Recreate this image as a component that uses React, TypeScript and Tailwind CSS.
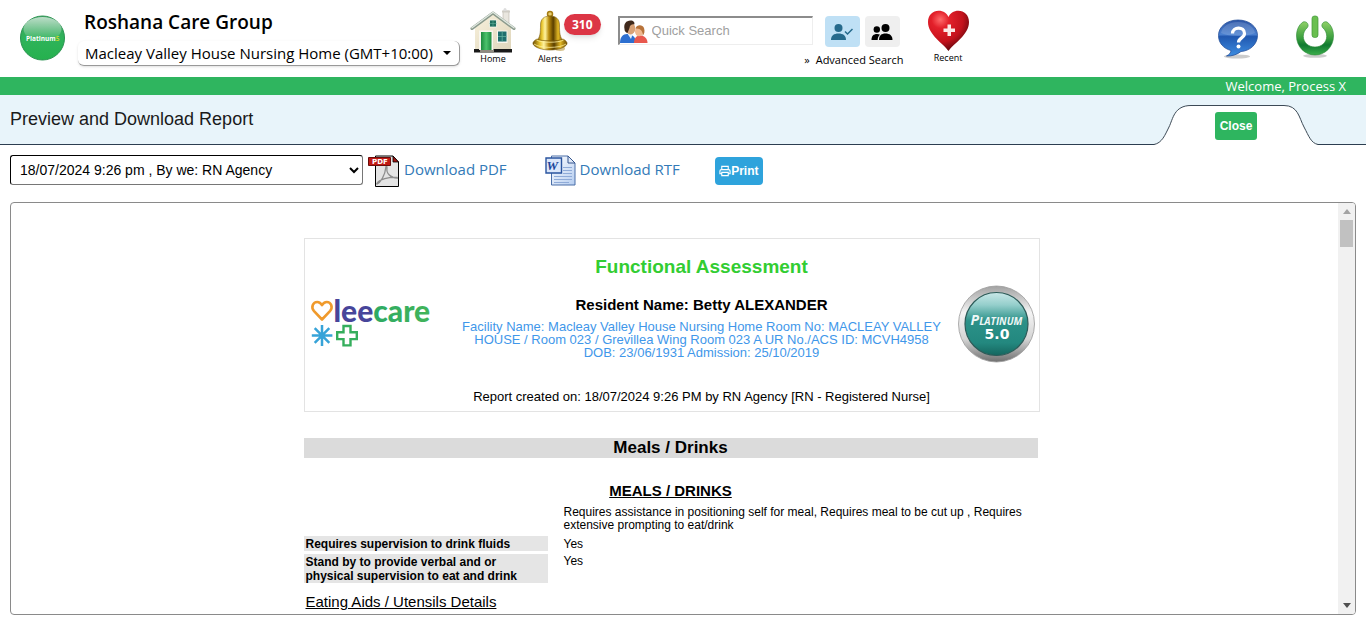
import React from "react";

const UI = "font-['Open_Sans','Noto_Sans',sans-serif]";
const ARIAL = "font-['Liberation_Sans',Arial,sans-serif]";

function PlatinumLogo() {
  return (
    <svg className="size-[46px] shrink-0" viewBox="0 0 46 46" role="img" aria-label="Platinum 5">
      <defs>
        <linearGradient id="ball" x1="0" y1="0" x2="0" y2="1">
          <stop offset="0" stopColor="#3f9f62" />
          <stop offset=".5" stopColor="#2fb35a" />
          <stop offset="1" stopColor="#25b14e" />
        </linearGradient>
        <linearGradient id="shine" x1="0" y1="0" x2="0" y2="1">
          <stop offset="0" stopColor="#fff" stopOpacity=".65" />
          <stop offset="1" stopColor="#fff" stopOpacity="0" />
        </linearGradient>
      </defs>
      <circle cx="23.500" cy="23" r="22" fill="url(#ball)" stroke="#2a9350" strokeWidth="1" />
      <ellipse cx="23.500" cy="14" rx="19" ry="12" fill="url(#shine)" />
      <text x="7" y="25.500" fontSize="6.500" fontWeight="700" fontFamily="Open Sans" fill="#fff">
        Platinum<tspan fill="#b9d532">5</tspan>
      </text>
    </svg>
  );
}

function HomeIcon() {
  return (
    <svg className="h-[45px] w-[46px]" viewBox="0 0 46 45" aria-hidden="true">
      <defs>
        <linearGradient id="wall" x1="0" y1="0" x2="1" y2="1">
          <stop offset="0" stopColor="#f8f1dc" />
          <stop offset="1" stopColor="#dfd6bc" />
        </linearGradient>
        <linearGradient id="door" x1="0" y1="0" x2="1" y2="0">
          <stop offset="0" stopColor="#1c8a3e" />
          <stop offset=".5" stopColor="#4cc26c" />
          <stop offset="1" stopColor="#1d8c40" />
        </linearGradient>
      </defs>
      <path d="M33 3h6v18l-6-6z" fill="#e9e6df" stroke="#b8b4aa" strokeWidth=".6" />
      <path d="M32 2.500h8v2h-8z" fill="#cfccc5" />
      <circle cx="35" cy="1.500" r="1.500" fill="#ddd" />
      <path d="M5 20 23 6l18 14v21H5z" fill="url(#wall)" />
      <path d="M4 41h38v3.500H4z" fill="#1a1a1a" />
      <path d="M10 41h14v3.500H10z" fill="#8f8b80" />
      <path d="M2 20.500 23 5l21 15.500" fill="none" stroke="#8b9a8c" strokeWidth="3" strokeLinecap="round" strokeLinejoin="round" />
      <path d="M2 19.800 23 4.300l21 15.500" fill="none" stroke="#dfe7df" strokeWidth="1.400" strokeLinecap="round" />
      <path d="M19.500 12h7v7h-7z" fill="#1f6f5e" stroke="#f7f7ef" strokeWidth=".8" />
      <path d="M23 12v7M19.500 15.500h7" stroke="#5fae98" strokeWidth=".6" />
      <path d="M9 22.500h14V42H9z" fill="#f8f6ee" />
      <path d="M11 24h10.500v18H11z" fill="url(#door)" />
      <path d="M27 22.500h10.500V35H27z" fill="#f8f6ee" />
      <path d="M28 23.500h8.500v10H28z" fill="#1f6f6e" />
      <path d="M32.200 23.500v10M28 28.500h8.500" stroke="#62b0a0" strokeWidth=".8" />
    </svg>
  );
}

function BellIcon() {
  return (
    <svg className="h-[43px] w-9" viewBox="0 0 36 43" aria-hidden="true">
      <defs>
        <linearGradient id="gold" x1="0" y1="0" x2="1" y2="0">
          <stop offset="0" stopColor="#6d4c00" />
          <stop offset=".2" stopColor="#e8c42c" />
          <stop offset=".32" stopColor="#fff3a0" />
          <stop offset=".46" stopColor="#b98b0c" />
          <stop offset=".62" stopColor="#5a3f00" />
          <stop offset=".8" stopColor="#e3b824" />
          <stop offset="1" stopColor="#6c4b00" />
        </linearGradient>
      </defs>
      <ellipse cx="28" cy="38.500" rx="5" ry="2.500" fill="#b99a40" opacity=".6" />
      <circle cx="18" cy="4" r="2.500" fill="#e8cf70" stroke="#a67c12" strokeWidth="1.500" />
      <path d="M18 6c-6 0-9.500 3-9.500 9 0 8-.5 12.500-4 16h27c-3.500-3.500-4-8-4-16 0-6-3.500-9-9.500-9z" fill="url(#gold)" stroke="#76560a" strokeWidth=".5" />
      <path d="M5 29c-3 1.500-4.500 3.500-4 5 1.500 3.500 9 6 17 6s15.500-2.500 17-6c.5-1.500-1-3.500-4-5-4 2.500-22 2.500-26 0z" fill="url(#gold)" stroke="#76560a" strokeWidth=".6" />
      <path d="M4.500 30c5 3 22 3 27 0M2 34c6 4.500 26 4.500 32 0" fill="none" stroke="#fff0a0" strokeWidth=".9" opacity=".85" />
    </svg>
  );
}

function PeopleIcon() {
  return (
    <svg className="h-6 w-[28px] shrink-0" viewBox="0 0 28 24" aria-hidden="true">
      <path d="M0 24c0-6 3-9 7-9s9 2 9 9z" fill="#2d6fd0" />
      <path d="M7 14h6l-2 6z" fill="#e9f1fb" />
      <path d="M14 24c0-5 2.500-7.500 6-7.500 4 0 7.500 2.500 7.500 7.500z" fill="#e8584e" />
      <ellipse cx="10.500" cy="9.500" rx="4.800" ry="6" fill="#d9a277" />
      <path d="M4.500 10c-1-5 1.500-8.500 6-8.500 3 0 4.500 2 3.800 3.800-2.800-.3-4.500.7-4.800 3.700L7.500 14c-2-.5-3-2-3-4z" fill="#40291b" />
      <ellipse cx="19" cy="12.500" rx="4" ry="4.800" fill="#f0b88f" />
      <path d="M15.500 9.500c1-4 7-4.500 8.500-.5 1 3 .5 6-1.500 8 .5-3-.5-5-2-6.300-1.500-1-3-1.200-5-1.200z" fill="#b8733a" />
    </svg>
  );
}

function HeartIcon() {
  return (
    <svg className="h-[42px] w-[43px]" viewBox="0 0 43 42" aria-hidden="true">
      <defs>
        <radialGradient id="heart" cx=".3" cy=".22" r=".85">
          <stop offset="0" stopColor="#ff6a6a" />
          <stop offset=".25" stopColor="#e3202a" />
          <stop offset=".65" stopColor="#c3121c" />
          <stop offset="1" stopColor="#4e050a" />
        </radialGradient>
      </defs>
      <path d="M21.500 41C17 34 1 25 1 12 1 5 6 .8 11.500.8c5 0 8.500 2.700 10 6.200 1.500-3.500 5-6.200 10-6.200C37 .8 42 5 42 12c0 13-16 22-20.500 29z" fill="url(#heart)" />
      <path d="M20.500 14.500h3.500v4h4V22h-4v4h-3.500v-4h-4v-3.500h4z" fill="#fbe9e6" />
    </svg>
  );
}

function HelpIcon() {
  return (
    <svg className="h-10 w-10" viewBox="0 0 40 40" aria-hidden="true">
      <defs>
        <linearGradient id="bubble" x1="0" y1="0" x2="0" y2="1">
          <stop offset="0" stopColor="#2c55a5" />
          <stop offset=".4" stopColor="#4a80d0" />
          <stop offset=".46" stopColor="#2158b0" />
          <stop offset="1" stopColor="#3d8de0" />
        </linearGradient>
      </defs>
      <ellipse cx="19" cy="37.500" rx="13" ry="2" fill="#999" opacity=".5" />
      <path d="M20 1c11 0 19.500 6.500 19.500 15.500S31.500 32 23 32.500C20 35 14 37.500 8.500 37c3-1.500 4.500-3.500 4.500-5.500C5.500 29.500.5 24 .5 16.500.5 7.500 9 1 20 1z" fill="url(#bubble)" stroke="#27509a" strokeWidth=".8" />
      <path d="M20 3c9 0 16 4.500 17 11-8 4-26 4-34 0C4 7.500 11 3 20 3z" fill="#fff" opacity=".15" />
      <path d="M14.500 14.500c0-7 12-7.500 12 0 0 4.500-6 4.300-6 9" fill="none" stroke="#fff" strokeWidth="3.200" />
      <circle cx="20.500" cy="27.500" r="2" fill="#fff" />
    </svg>
  );
}

function PowerIcon() {
  return (
    <svg className="h-[43px] w-10" viewBox="0 0 40 43" aria-hidden="true">
      <defs>
        <linearGradient id="power" x1="0" y1="0" x2="0" y2="1">
          <stop offset="0" stopColor="#8fd067" />
          <stop offset=".5" stopColor="#3a9e3e" />
          <stop offset=".7" stopColor="#107a30" />
          <stop offset="1" stopColor="#3cae4c" />
        </linearGradient>
      </defs>
      <ellipse cx="19" cy="40.800" rx="12" ry="2" fill="#999" opacity=".5" />
      <path d="M7 7C2.500 10 .5 15.500.5 21 .5 32 9 40 19 40s18.500-8 18.500-19c0-5.500-2-11-6.500-14-3.500-1.500-7 3-4 6 2.300 2 3.700 5 3.700 8.300C30.700 27.500 25.500 32 19 32S7.300 27.500 7.300 21.300C7.300 18 8.700 15 11 13c3-3-.5-7.500-4-6z" fill="url(#power)" stroke="#2b8a36" strokeWidth=".6" />
      <rect x="16" y="1" width="6" height="21.500" rx="2.500" fill="#6abf50" stroke="#3f9638" strokeWidth=".7" />
    </svg>
  );
}

function PdfIcon() {
  return (
    <svg className="h-8 w-[31px] shrink-0" viewBox="0 0 31 32" aria-hidden="true">
      <path d="M7.500 1h17.500l5.500 6v24.500h-23z" fill="#e4e4e4" stroke="#000" />
      <path d="M25 1v6h5.500z" fill="#a31512" stroke="#000" strokeWidth=".8" />
      <path d="M8.500 29.500c4-2 8.500-8.500 9.300-17 .2-2 1.500-1.500 1.200.5-1 5 3.500 10.500 11 10M8.500 29c3-5 12-7 21-6.500" fill="none" stroke="#8e8e8e" strokeWidth="1.300" />
      <path d="M.5 2.500h22v8H.5z" fill="#c11a14" stroke="#6a0d0a" />
      <text x="4" y="9" fontSize="7" fontWeight="700" fontFamily="DejaVu Sans" fill="#fff">PDF</text>
    </svg>
  );
}

function WordIcon() {
  return (
    <svg className="h-[31px] w-[31px] shrink-0" viewBox="0 0 31 31" aria-hidden="true">
      <defs>
        <linearGradient id="page" x1="0" y1="0" x2="1" y2="1">
          <stop offset="0" stopColor="#fff" />
          <stop offset="1" stopColor="#b5cdf0" />
        </linearGradient>
      </defs>
      <path d="M6.500 1H23l7 7v22H6.500z" fill="url(#page)" stroke="#4a6ea8" />
      <path d="M23 1v7h7z" fill="#dfe9f8" stroke="#34558e" />
      <path d="M18 12.500h9M18 15.500h9M18 18.500h9M9 21.500h18M9 24.500h18M9 27.500h15" stroke="#8fabd8" />
      <path d="M1 3h15.500v15H1z" fill="#dbe7fa" stroke="#2a549f" strokeWidth="1.400" />
      <text x="1.500" y="15" fontSize="13" fontWeight="700" fontStyle="italic" fontFamily="Liberation Serif" fill="#1c469c">W</text>
    </svg>
  );
}

function PersonCheckIcon() {
  return (
    <svg className="h-[18px] w-[22px]" viewBox="0 0 22 18" aria-hidden="true">
      <circle cx="7.500" cy="5" r="4" fill="#266a8c" />
      <path d="M0 17C0 12.500 3 10.500 7.500 10.500s7.500 2 7.500 6.500z" fill="#266a8c" />
      <path d="m14 8.500 2.500 2.500L21.500 6" fill="none" stroke="#266a8c" strokeWidth="1.500" />
    </svg>
  );
}

function GroupIcon() {
  return (
    <svg className="h-[18px] w-[22px]" viewBox="0 0 22 18" aria-hidden="true">
      <circle cx="5.800" cy="6.500" r="3.200" />
      <path d="M.5 17c0-4 2-6 5.500-6 1.200 0 2.200.2 3 .7-1.500 1.200-2.300 3-2.300 5.300z" />
      <circle cx="14.500" cy="5" r="4" />
      <path d="M8 17c0-4.500 2.500-6.500 6.500-6.500s7 2 7 6.500z" />
    </svg>
  );
}

function LeecareLogo() {
  return (
    <svg className="h-[60px] w-[124px] shrink-0" viewBox="-1 -10 124 60" role="img" aria-label="leecare">
      <defs>
        <linearGradient id="care" x1="0" y1="0" x2="1" y2="0">
          <stop offset="0" stopColor="#1ea36a" />
          <stop offset="1" stopColor="#42b45a" />
        </linearGradient>
      </defs>
      <path d="M11 20.500 2.800 11.800C-.2 8 2 3 6.200 3c2.300 0 3.800 1.300 4.800 3.200C12 4.300 13.500 3 15.800 3 20 3 22.200 8 19.200 11.800z" fill="none" stroke="#f09a2c" strokeWidth="2.600" strokeLinejoin="round" />
      <text x="22.500" y="22.500" fontSize="30" fontWeight="900" fontFamily="Lato" fill="#47459a">
        lee<tspan fill="url(#care)">care</tspan>
      </text>
      <path d="M11 26v21M.8 36.500h20.600M3.700 29.200l14.600 14.600M18.300 29.200 3.700 43.800" stroke="#37a3d8" strokeWidth="2.500" />
      <path d="M32.500 27h7v6.300h6.300v6.800h-6.300v6.300h-7v-6.300h-6.300v-6.800h6.300z" fill="none" stroke="#35ae5c" strokeWidth="2.400" />
    </svg>
  );
}

function PlatinumBadge() {
  return (
    <svg className="size-[78px] shrink-0" viewBox="0 0 78 78" role="img" aria-label="Platinum 5.0">
      <defs>
        <linearGradient id="rim" x1="0" y1="0" x2="0" y2="1">
          <stop offset="0" stopColor="#a2a2a2" />
          <stop offset=".35" stopColor="#f4f4f4" />
          <stop offset=".7" stopColor="#d4d4d4" />
          <stop offset="1" stopColor="#707070" />
        </linearGradient>
        <linearGradient id="teal" x1="0" y1="0" x2="0" y2="1">
          <stop offset="0" stopColor="#c9e8e8" />
          <stop offset=".2" stopColor="#94cecb" />
          <stop offset=".45" stopColor="#2b9188" />
          <stop offset=".8" stopColor="#23887f" />
          <stop offset="1" stopColor="#15665f" />
        </linearGradient>
      </defs>
      <circle cx="38.500" cy="39" r="38" fill="url(#rim)" stroke="#999" strokeWidth=".8" />
      <circle cx="38.500" cy="39" r="31.500" fill="url(#teal)" stroke="#2c5b58" strokeWidth="1.200" />
      <text x="38.500" y="40" textAnchor="middle" fontSize="14" fontWeight="700" fontStyle="italic" fontFamily="Open Sans" fill="#eef7f6">
        P<tspan fontSize="10">LATINUM</tspan>
      </text>
      <text x="39" y="54" textAnchor="middle" fontSize="14" fontWeight="700" fontFamily="DejaVu Sans" fill="#fff">5.0</text>
    </svg>
  );
}

function Header() {
  return (
    <header className={`${UI} flex h-[77px] items-start bg-white pr-[30px] pl-[19px] text-black`}>
      <div className="pt-[15px]"><PlatinumLogo /></div>
      <div className="ml-[13px] pt-2">
        <h1 className="pl-1.5 text-[19px] leading-7 font-semibold">Roshana Care Group</h1>
        <div className="mt-[5px] grid w-[382px] items-center rounded-md border-r border-b border-[#999] shadow-sm">
          <select aria-label="Facility" className="col-start-1 row-start-1 h-6 w-full appearance-none bg-transparent pl-[7px] text-[15px] leading-6">
            <option>Macleay Valley House Nursing Home (GMT+10:00)</option>
          </select>
          <svg className="pointer-events-none col-start-1 row-start-1 mr-2 h-1 w-2 justify-self-end" viewBox="0 0 8 4" aria-hidden="true"><path d="M0 0h8L4 4z" /></svg>
        </div>
      </div>
      <nav className="flex items-start pt-2 text-[9px] leading-3">
        <a href="#home" className="ml-2.5 flex w-[46px] flex-col items-center"><HomeIcon />Home</a>
        <a href="#alerts" className="ml-4 flex items-start">
          <span className="flex flex-col items-center"><span className="pt-0.5"><BellIcon /></span>Alerts</span>
          <span className="-ml-1 mt-1.5 flex h-[21px] items-center rounded-full bg-[#dc3545] px-2 text-[12px] font-bold text-white shadow-md">310</span>
        </a>
      </nav>
      <div className="ml-[17px] pt-4">
        <div className="flex items-start">
          <div className="flex h-[29px] w-[195px] items-center border border-t-2 border-l-2 border-[#eee] border-t-[#8c8c8c] border-l-[#8c8c8c]">
            <PeopleIcon />
            <input type="text" aria-label="Quick Search" placeholder="Quick Search" className="w-full min-w-0 pl-1 text-[13px] outline-none placeholder:text-[#a0a0a0] font-['Liberation_Sans',Arial,sans-serif]" />
          </div>
          <button type="button" aria-label="Current residents" className="ml-3 flex h-[31px] w-[35px] items-center justify-center rounded bg-[#bfe0f5]"><PersonCheckIcon /></button>
          <button type="button" aria-label="All residents" className="ml-[5px] flex h-[31px] w-[35px] items-center justify-center rounded bg-[#efefef]"><GroupIcon /></button>
        </div>
        <a href="#advanced" className="mt-[5px] -mr-1 flex justify-end gap-1.5 text-[11px] leading-4"><span>»</span> Advanced Search</a>
      </div>
      <a href="#recent" className="ml-[27px] flex flex-col items-center pt-2.5 text-[9px] leading-3"><HeartIcon />Recent</a>
      <div className="ml-auto flex gap-[38px]">
        <a href="#help" aria-label="Help" className="pt-[19px]"><HelpIcon /></a>
        <a href="#logout" aria-label="Log out" className="pt-[15px]"><PowerIcon /></a>
      </div>
    </header>
  );
}

function TitleBar() {
  return (
    <div className={`${ARIAL} flex h-[50px] justify-between border-b border-[#2c3e50] bg-[#e8f4fa] pr-12 pl-2.5`}>
      <h2 className="text-[18px] leading-[49px] text-[#1a1a1a]">Preview and Download Report</h2>
      <div className="-mb-px grid justify-items-center self-end">
        <svg className="col-start-1 row-start-1 h-10 w-[164px]" viewBox="0 0 164 40" aria-hidden="true">
          <path d="M0 39.500C8 38 11 30 15 22S20 .5 37 .5H130c14 0 15 12 20 21.500s7 16 14 17.500V40H0z" fill="#fff" />
          <path d="M0 39.500C8 38 11 30 15 22S20 .5 37 .5H130c14 0 15 12 20 21.500s7 16 14 17.500" fill="none" stroke="#3d4a56" />
        </svg>
        <button type="button" className="col-start-1 row-start-1 mt-[7px] h-7 w-[42px] rounded-[3px] bg-[#2eb55f] text-[12px] font-bold text-white">Close</button>
      </div>
    </div>
  );
}

function Toolbar() {
  return (
    <div className="flex h-[57px] items-start px-2.5 pt-2.5">
      <select aria-label="Report version" className={`${ARIAL} h-[30px] w-[353px] rounded-[3px] border border-[#767676] border-t-black border-l-black bg-white pl-[5px] text-[14px] text-black`}>
        <option>18/07/2024 9:26 pm , By we: RN Agency</option>
      </select>
      <a href="#pdf" className={`${UI} ml-[5px] flex items-center gap-[5px] text-[15px] leading-5 text-[#337ab7]`}><PdfIcon /><span className="pb-1">Download PDF</span></a>
      <a href="#rtf" className={`${UI} ml-[38px] flex items-center gap-1 text-[15px] leading-5 text-[#337ab7]`}><WordIcon /><span className="pb-1">Download RTF</span></a>
      <button type="button" className={`${ARIAL} mt-0.5 ml-[35px] flex h-7 w-12 items-center justify-center rounded bg-[#2ea3dc] text-[12px] font-bold text-white`}>
        <svg className="h-3 w-3" viewBox="0 0 13 12" fill="none" stroke="#fff" strokeWidth="1.200" aria-hidden="true">
          <path d="M3 4.500V1h7v3.500M3 9H1V6c0-1 .5-1.500 1.500-1.500h8c1 0 1.500.5 1.500 1.500v3h-2M3 7.500h7V11H3z" />
        </svg>
        Print
      </button>
    </div>
  );
}

const rows = [
  ["Requires supervision to drink fluids", "Yes"],
  ["Stand by to provide verbal and or physical supervision to eat and drink", "Yes"],
];

function Report() {
  return (
    <article className={`${ARIAL} mx-auto w-[736px] pt-[35px] text-black`}>
      <header className="flex h-[174px] border border-[#e3e3e3] pr-[3px] pl-[5px]">
        <div className="pt-[50px]"><LeecareLogo /></div>
        <div className="flex flex-1 flex-col items-center pl-3 text-center">
          <h3 className="mt-4 text-[19px] leading-6 font-bold text-[#32cd32]">Functional Assessment</h3>
          <p className="mt-4 text-[15px] leading-5 font-bold">Resident Name: Betty ALEXANDER</p>
          <p className="mt-[5px] w-[500px] text-[13px] leading-[13px] text-[#3f97ea]">
            Facility Name: Macleay Valley House Nursing Home Room No: MACLEAY VALLEY
            <br />
            HOUSE / Room 023 / Grevillea Wing Room 023 A UR No./ACS ID: MCVH4958
            <br />
            DOB: 23/06/1931 Admission: 25/10/2019
          </p>
          <p className="mt-7 text-[13px] leading-5">Report created on: 18/07/2024 9:26 PM by RN Agency [RN - Registered Nurse]</p>
        </div>
        <div className="pt-[46px]"><PlatinumBadge /></div>
      </header>
      <section className="mt-[26px] w-[734px]">
        <h3 className="h-5 bg-[#dbdbdb] text-center text-[17px] leading-5 font-bold">Meals / Drinks</h3>
        <h4 className="mt-[23px] text-center text-[15px] leading-5 font-bold underline">MEALS / DRINKS</h4>
        <table className="mt-[5px] w-full text-[12px] leading-[14px]">
          <tbody>
            <tr>
              <td className="w-[244px]" />
              <td className="pr-3 pb-1 pl-4 leading-[13px]">Requires assistance in positioning self for meal, Requires meal to be cut up , Requires extensive prompting to eat/drink</td>
            </tr>
            {rows.map(([label, value]) => (
              <tr key={label} className="align-top">
                <th scope="row" className="border-b-[3px] border-white bg-[#e5e5e5] bg-clip-padding px-0.5 pt-px text-left font-bold">{label}</th>
                <td className="pt-px pl-4">{value}</td>
              </tr>
            ))}
          </tbody>
        </table>
        <h4 className="mt-1.5 pl-0.5 text-[15px] leading-5 underline">Eating Aids / Utensils Details</h4>
      </section>
    </article>
  );
}

function Viewer() {
  return (
    <section className="mx-2.5 mb-[18px] flex min-h-0 flex-1 overflow-hidden rounded border border-[#8a8a8a]">
      <div className="min-w-0 flex-1 overflow-hidden pr-1.5"><Report /></div>
      <div className="flex w-[17px] flex-col items-center bg-[#f1f1f1]" aria-hidden="true">
        <svg className="h-[17px] w-2" viewBox="0 0 8 17"><path d="M0 11h8L4 6z" fill="#a3a3a3" /></svg>
        <div className="h-[27px] w-[13px] bg-[#c1c1c1]" />
        <svg className="mt-auto h-[17px] w-2" viewBox="0 0 8 17"><path d="M0 6h8l-4 5z" fill="#505050" /></svg>
      </div>
    </section>
  );
}

export default function App() {
  return (
    <div className="flex h-screen flex-col overflow-hidden bg-white">
      <Header />
      <div className={`${UI} h-[18px] bg-[#2fb55f] pr-5 text-right text-[13px] leading-[18px] text-white`}>Welcome, Process X</div>
      <TitleBar />
      <Toolbar />
      <Viewer />
    </div>
  );
}
